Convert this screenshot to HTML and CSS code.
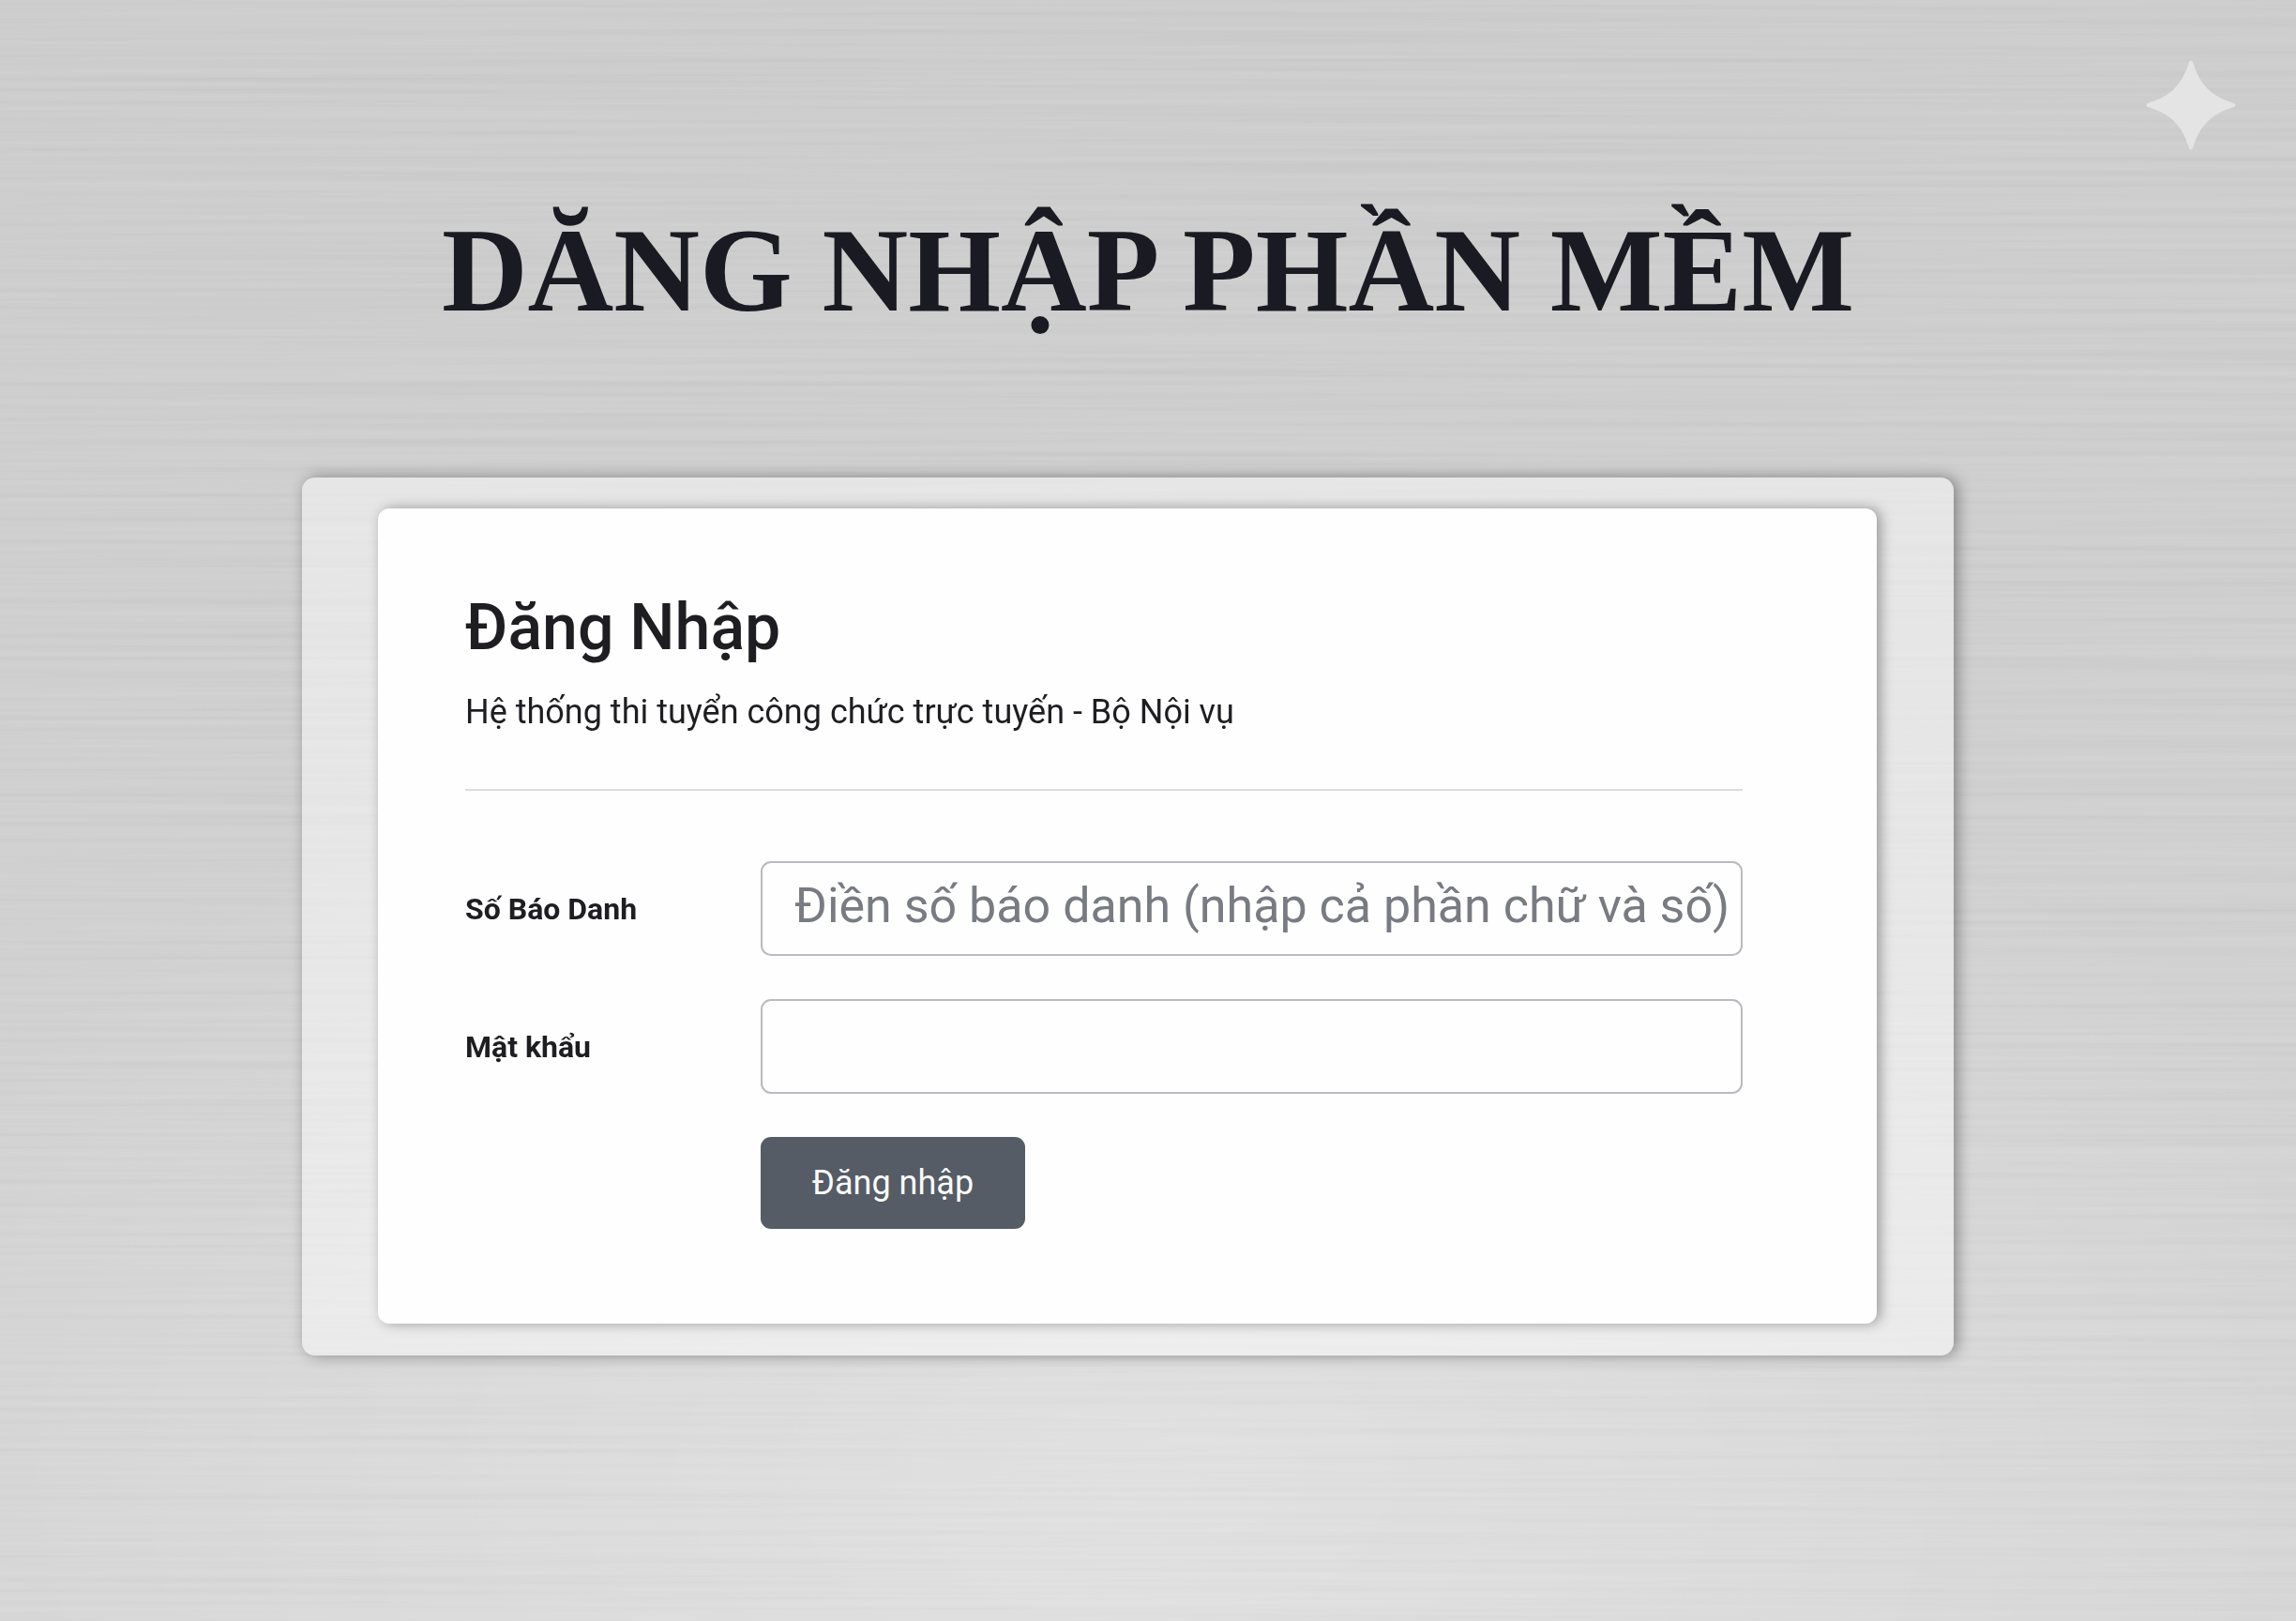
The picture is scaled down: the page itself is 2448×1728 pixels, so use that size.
FILE: index.html
```html
<!DOCTYPE html>
<html lang="vi">
<head>
<meta charset="utf-8">
<meta name="viewport" content="width=device-width, initial-scale=1">
<title>Đăng nhập phần mềm</title>
<link rel="stylesheet" href="styles.css">
</head>
<body>
<svg class="metal" aria-hidden="true">
  <filter id="brushed" x="0" y="0" width="100%" height="100%" color-interpolation-filters="sRGB">
    <feTurbulence type="fractalNoise" baseFrequency="0.001 0.16" numOctaves="3" seed="7"/>
    <feColorMatrix values="1 0 0 0 0  1 0 0 0 0  1 0 0 0 0  0 0 0 0 1"/>
  </filter>
  <rect width="100%" height="100%" filter="url(#brushed)"/>
</svg>
<svg class="sparkle" viewBox="0 0 96 96" aria-hidden="true">
  <path d="M46 2Q48 -1 50 2C57 26 70 39 94 46Q97 48 94 50C70 57 57 70 50 94Q48 97 46 94C39 70 26 57 2 50Q-1 48 2 46C26 39 39 26 46 2Z"/>
</svg>
<main class="page">
  <h1 class="title">DĂNG NHẬP PHẦN MỀM</h1>
  <div class="panel">
    <section class="card">
      <header class="card-head">
        <h2 class="card-title">Đăng Nhập</h2>
        <p class="card-sub">Hệ thống thi tuyển công chức trực tuyến - Bộ Nội vụ</p>
      </header>
      <form class="form">
        <label class="label" for="sbd">Số Báo Danh</label>
        <input class="field" id="sbd" type="text" placeholder="Điền số báo danh (nhập cả phần chữ và số)">
        <label class="label" for="pwd">Mật khẩu</label>
        <input class="field" id="pwd" type="password">
        <button class="submit" type="submit">Đăng nhập</button>
      </form>
    </section>
  </div>
</main>
</body>
</html>
```
FILE: styles.css
```css
* { box-sizing: border-box; }

body {
  margin: 0;
  min-height: 100vh;
  background:
    radial-gradient(ellipse 60% 50% at 50% 92%, rgba(255, 255, 255, 0.3), rgba(255, 255, 255, 0)),
    linear-gradient(#cdcdcd, #d0d0d0 50%, #d5d5d5);
  color: #1e1e22;
  font-family: Roboto, "Liberation Sans", sans-serif;
}

.metal {
  position: fixed;
  inset: 0;
  z-index: -1;
  width: 100%;
  height: 100%;
  opacity: 0.2;
  mix-blend-mode: soft-light;
}

.sparkle {
  position: absolute;
  top: 64px;
  right: 64px;
  width: 96px;
  height: 96px;
  fill: #e4e4e4;
}

.page { padding: 214px 0 96px; }

.title {
  margin: 0 0 147px;
  text-align: center;
  color: #1a1a22;
  font: bold 127px/148px "Liberation Serif", serif;
}

.panel {
  margin: 0 365px 0 322px;
  padding: 33px 82px 34px 81px;
  border-radius: 14px;
  background: rgba(255, 255, 255, 0.48);
  box-shadow: 4px 0 16px rgba(0, 0, 0, 0.38);
}

.card {
  padding: 87px 143px 101px 93px;
  border-radius: 12px;
  background: #fefefe;
  box-shadow: 4px 0 14px rgba(0, 0, 0, 0.34);
}

.card-head {
  padding-bottom: 54px;
  border-bottom: 2px solid #dcdcde;
}

.card-title {
  margin: 0 0 22px;
  font-size: 68px;
  font-weight: 500;
  line-height: 80px;
}

.card-sub {
  margin: 0;
  font-size: 36px;
  line-height: 56px;
}

.form {
  display: grid;
  grid-template-columns: 315px 1fr;
  align-items: center;
  row-gap: 46px;
  margin-top: 75px;
}

.label {
  font-size: 32px;
  font-weight: 700;
  line-height: 48px;
}

.field {
  width: 100%;
  height: 101px;
  padding: 0 10px 6px 34px;
  border: 2px solid #b9bbc0;
  border-radius: 11px;
  background: transparent;
  color: inherit;
  font: 52px/80px Roboto, sans-serif;
}

.field::placeholder {
  color: #787b82;
  opacity: 1;
}

.submit {
  grid-column: 2;
  justify-self: start;
  width: 282px;
  height: 98px;
  border: 0;
  border-radius: 11px;
  background: #555c66;
  color: #fafafa;
  font: 36px/48px Roboto, sans-serif;
}
```
